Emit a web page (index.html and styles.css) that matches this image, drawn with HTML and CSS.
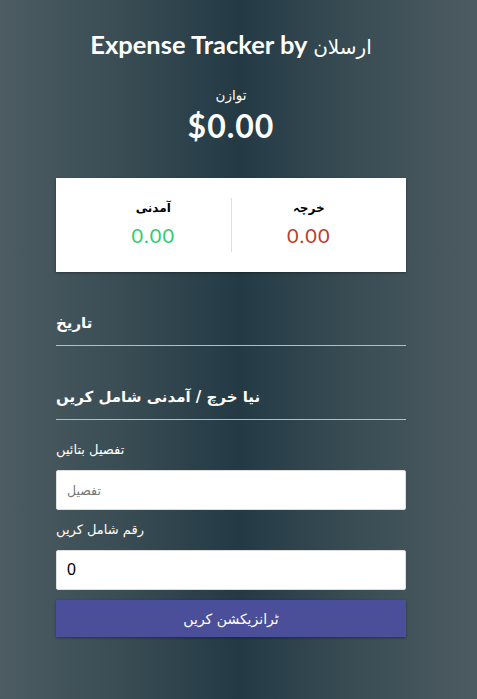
FILE: index.html
```html
<!DOCTYPE html>
<html lang="ur">
<head>
<meta charset="utf-8">
<title>Expense Tracker</title>
<link rel="stylesheet" href="styles.css">
</head>
<body>
<div class="container">
  <h2 class="title">Expense Tracker by <span class="title-name">ارسلان</span></h2>
  <div class="balance">
    <h4 class="balance-label">توازن</h4>
    <h1 class="balance-value">$0.00</h1>
  </div>
  <div class="inc-exp">
    <div class="inc-exp-col">
      <h4 class="col-label">آمدنی</h4>
      <p class="money plus">0.00</p>
    </div>
    <div class="inc-exp-col">
      <h4 class="col-label">خرچہ</h4>
      <p class="money minus">0.00</p>
    </div>
  </div>
  <h3 class="section-title">تاریخ</h3>
  <ul class="list"></ul>
  <h3 class="section-title">نیا خرچ / آمدنی شامل کریں</h3>
  <form class="form">
    <div class="form-control">
      <label class="field-label" for="text">تفصیل بتائیں</label>
      <input class="field-input" type="text" id="text" placeholder="تفصیل">
    </div>
    <div class="form-control">
      <label class="field-label" for="amount">رقم شامل کریں</label>
      <input class="field-input" type="number" id="amount" value="0">
    </div>
    <button class="btn" type="button">ٹرانزیکشن کریں</button>
  </form>
</div>
</body>
</html>
```
FILE: styles.css
```css
* { box-sizing: border-box; }
html, body { margin: 0; padding: 0; }
body {
  font-family: Lato, "DejaVu Sans", sans-serif;
  background: linear-gradient(to right, #4c5c62 0%, #3a4d54 25%, #233a45 50%, #3a4d54 75%, #4c5b61 100%);
  min-height: 699px;
  color: #fff;
  padding: 0 15px 0 0;
}
.container {
  width: 350px;
  margin: 30px auto;
}
.title {
  font-size: 25.5px;
  line-height: 29px;
  height: 29px;
  font-weight: 700;
  text-align: center;
  margin: 0 0 26px;
}
.title-name {
  font-family: "DejaVu Sans", sans-serif;
  font-size: 20px;
  font-weight: 400;
}
.balance { text-align: center; }
.balance-label {
  font-family: "DejaVu Sans", sans-serif;
  font-size: 13.5px;
  font-weight: 400;
  line-height: 20px;
  margin: 0;
}
.balance-value {
  font-size: 32px;
  line-height: 38px;
  letter-spacing: 1px;
  margin: 2px 0 0;
}
.inc-exp {
  background: #fff;
  color: #000;
  box-shadow: 0 1px 3px rgba(0,0,0,0.12), 0 1px 2px rgba(0,0,0,0.24);
  padding: 20px;
  display: flex;
  margin: 33px 0 20px;
}
.inc-exp-col {
  flex: 1;
  text-align: center;
}
.inc-exp-col:first-of-type { border-right: 1px solid #dedede; }
.col-label {
  font-family: "DejaVu Sans", sans-serif;
  font-size: 12px;
  font-weight: 700;
  line-height: 20px;
  margin: 0;
}
.money {
  font-size: 20px;
  line-height: 24px;
  letter-spacing: 1px;
  margin: 5px 0;
}
.plus { color: #2ecc71; }
.minus { color: #c0392b; }
.section-title {
  font-family: "DejaVu Sans", sans-serif;
  font-size: 15px;
  font-weight: 700;
  line-height: 23px;
  border-bottom: 1px solid #bbb;
  padding-bottom: 10px;
  margin: 40px 0 10px;
}
.list {
  list-style: none;
  padding: 0;
  margin: 0 0 40px;
}
.form { margin: 0; }
.field-label {
  display: inline-block;
  margin: 10px 0;
  font-family: "DejaVu Sans", sans-serif;
  font-size: 13px;
  line-height: 20px;
}
.field-input {
  border: 1px solid #dedede;
  border-radius: 2px;
  display: block;
  height: 40px;
  font-size: 16px;
  font-family: "Liberation Sans", Arial, sans-serif;
  padding: 0 10px;
  width: 100%;
  color: #000;
  background: #fff;
}
.field-input::placeholder {
  color: #777;
  font-family: "DejaVu Sans", sans-serif;
  font-size: 12.5px;
}
.btn {
  cursor: pointer;
  background: #4b4e98;
  box-shadow: 0 1px 3px rgba(0,0,0,0.12), 0 1px 2px rgba(0,0,0,0.24);
  color: #fff;
  border: 0;
  display: block;
  height: 37px;
  font-size: 14px;
  font-family: "DejaVu Sans", sans-serif;
  margin: 10px 0 30px;
  padding: 0 10px;
  width: 100%;
}
```
